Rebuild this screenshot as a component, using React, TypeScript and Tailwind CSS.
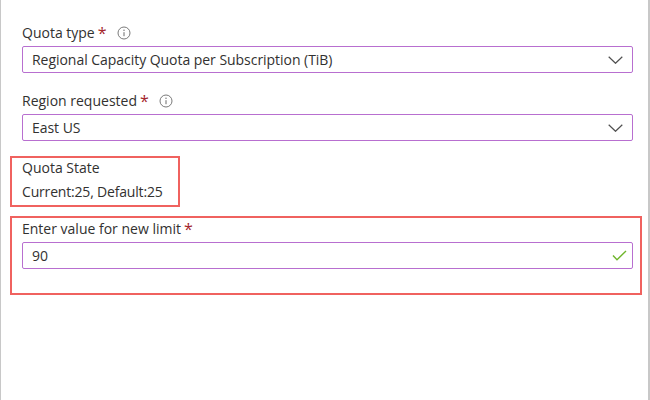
const INPUT_BORDER = "border border-[#b86fd0]";

function InfoIcon() {
  return (
    <svg width="14" height="14" viewBox="0 0 14 14" fill="none" aria-hidden>
      <circle cx="7" cy="7" r="6" stroke="#6b6b6b" strokeWidth="0.9" />
      <circle cx="7" cy="4.3" r="0.7" fill="#6b6b6b" />
      <path d="M7 6.2V10.2" stroke="#6b6b6b" strokeWidth="1" />
    </svg>
  );
}

function Chevron() {
  return (
    <svg width="15" height="8" viewBox="0 0 15 8" fill="none" aria-hidden>
      <path d="M0.7 0.7L7.5 7.3L14.3 0.7" stroke="#505050" strokeWidth="1.2" />
    </svg>
  );
}

function Check() {
  return (
    <svg className="-mr-[4px]" width="15" height="11" viewBox="0 0 15 11" fill="none" aria-hidden>
      <path d="M1 5.5L5 9.7L14 1" stroke="#6fb52c" strokeWidth="1.4" />
    </svg>
  );
}

function Label({ text, required, info }: { text: string; required?: boolean; info?: boolean }) {
  return (
    <div className="flex h-[20px] items-center text-[14px] leading-[20px] text-[#323130]">
      <span>{text}</span>
      {required && <span className="ml-[3px] text-[16px] text-[#a4262c]">*</span>}
      {info && (
        <span className="ml-[10px] flex">
          <InfoIcon />
        </span>
      )}
    </div>
  );
}

function Field({ value, icon }: { value: string; icon: React.ReactNode }) {
  return (
    <div
      className={`flex h-[27px] w-[611px] items-center justify-between rounded-[2px] bg-white pl-[9px] pr-[9px] text-[14px] tracking-[-0.04px] text-[#323130] ${INPUT_BORDER}`}
    >
      <span>{value}</span>
      {icon}
    </div>
  );
}

export default function App() {
  return (
    <div
      className="h-[400px] w-[650px] overflow-hidden border-l border-r-2 border-[#c8c8c8] bg-white pt-[23px]"
      style={{ fontFamily: '"Open Sans", "Noto Sans", sans-serif' }}
    >
      <div className="pl-[21px]">
        <Label text="Quota type" required info />
        <div className="mt-[3px]">
          <Field value="Regional Capacity Quota per Subscription (TiB)" icon={<Chevron />} />
        </div>
      </div>
      <div className="mt-[18px] pl-[21px]">
        <Label text="Region requested" required info />
        <div className="mt-[3px]">
          <Field value="East US" icon={<Chevron />} />
        </div>
      </div>
      <div className="ml-[9px] mt-[15px] h-[51px] w-[170px] border-2 border-[#f0625f] pl-[10px] text-[14px] leading-[20px] text-[#323130]">
        <div>Quota State</div>
        <div className="mt-[4px] tracking-[-0.18px]">Current:25, Default:25</div>
      </div>
      <div className="ml-[9px] mt-[9px] h-[79px] w-[632px] border-2 border-[#f0625f] pl-[10px] pt-[1px]">
        <Label text="Enter value for new limit" required />
        <div className="mt-[3px]">
          <Field value="90" icon={<Check />} />
        </div>
      </div>
    </div>
  );
}
